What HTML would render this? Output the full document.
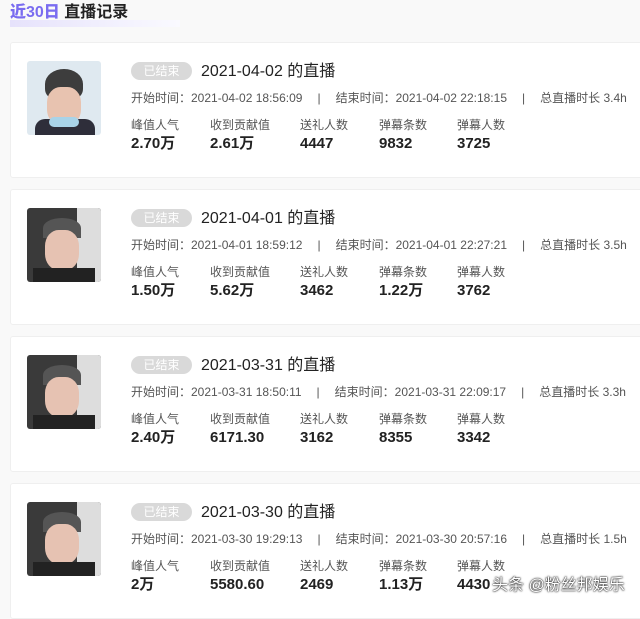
<!DOCTYPE html>
<html><head><meta charset="utf-8"><style>
*{margin:0;padding:0;box-sizing:border-box}
body{width:640px;height:610px;overflow:hidden;background:#f9f9f9;font-family:"Liberation Sans","Noto Sans CJK SC",sans-serif;color:#222;position:relative}
.hd{position:absolute;left:10px;top:2px;font-size:16px;line-height:22px;font-weight:bold;color:#222;z-index:2}
.hd b{color:#7a6cf0}
.hl{position:absolute;left:10px;top:20px;width:170px;height:7px;background:linear-gradient(90deg,#e6e2fb,#fafaff);z-index:1}
.card{position:absolute;left:10px;width:640px;height:136px;background:#fff;border:1px solid #efefef;border-radius:3px}
.av{position:absolute;left:16px;top:18px;width:74px;height:74px;border-radius:3px;overflow:hidden;background:#3a3a3a}
.badge{position:absolute;left:120px;top:19px;width:61px;height:18px;border-radius:9px;background:#d9d9d9;color:#fff;font-size:12px;text-align:center;line-height:18px}
.tt{position:absolute;left:190px;top:19px;font-size:16px;line-height:20px;color:#222}
.info{position:absolute;left:120px;top:47px;font-size:12px;line-height:16px;color:#555;white-space:nowrap}
.info i{font-style:normal;display:inline-block;margin:0 15px 0 15px}
.col{position:absolute;top:74px;font-size:12px;line-height:16px;color:#555}
.col b{display:block;font-size:15px;line-height:18px;height:18px;color:#222;margin-top:2px}
.wm{position:absolute;left:492px;top:576px;font-size:16px;line-height:20px;color:#fff;text-shadow:0 0 2px #000,0 0 1px #000}
</style></head><body>
<div class="hd"><b>近30日</b> 直播记录</div><div class="hl"></div>

<div class="card" style="top:42px">
<div class="av" style="background:#dfe9f0"><div style="position:absolute;left:18px;top:8px;width:38px;height:30px;background:#3d3d3d;border-radius:50% 50% 10px 10px"></div><div style="position:absolute;left:20px;top:26px;width:34px;height:38px;background:#e8c3b0;border-radius:40%"></div><div style="position:absolute;left:8px;top:58px;width:60px;height:20px;background:#2e2e3a;border-radius:10px 10px 0 0"></div><div style="position:absolute;left:22px;top:56px;width:30px;height:10px;background:#a9d3e8;border-radius:6px"></div></div>
<div class="badge">已结束</div><div class="tt">2021-04-02 的直播</div>
<div class="info">开始时间：2021-04-02 18:56:09<i>|</i>结束时间：2021-04-02 22:18:15<i>|</i>总直播时长 3.4h</div>
<div class="col" style="left:120px">峰值人气<b>2.70万</b></div><div class="col" style="left:199px">收到贡献值<b>2.61万</b></div><div class="col" style="left:289px">送礼人数<b>4447</b></div><div class="col" style="left:368px">弹幕条数<b>9832</b></div><div class="col" style="left:446px">弹幕人数<b>3725</b></div>
</div>

<div class="card" style="top:189px">
<div class="av"><div style="position:absolute;left:50px;top:0;width:24px;height:74px;background:#ddd"></div><div style="position:absolute;left:16px;top:10px;width:38px;height:20px;background:#555;border-radius:50% 50% 0 0"></div><div style="position:absolute;left:18px;top:22px;width:34px;height:40px;background:#e6c2b2;border-radius:40%"></div><div style="position:absolute;left:6px;top:60px;width:62px;height:14px;background:#222"></div></div>
<div class="badge">已结束</div><div class="tt">2021-04-01 的直播</div>
<div class="info">开始时间：2021-04-01 18:59:12<i>|</i>结束时间：2021-04-01 22:27:21<i>|</i>总直播时长 3.5h</div>
<div class="col" style="left:120px">峰值人气<b>1.50万</b></div><div class="col" style="left:199px">收到贡献值<b>5.62万</b></div><div class="col" style="left:289px">送礼人数<b>3462</b></div><div class="col" style="left:368px">弹幕条数<b>1.22万</b></div><div class="col" style="left:446px">弹幕人数<b>3762</b></div>
</div>

<div class="card" style="top:336px">
<div class="av"><div style="position:absolute;left:50px;top:0;width:24px;height:74px;background:#ddd"></div><div style="position:absolute;left:16px;top:10px;width:38px;height:20px;background:#555;border-radius:50% 50% 0 0"></div><div style="position:absolute;left:18px;top:22px;width:34px;height:40px;background:#e6c2b2;border-radius:40%"></div><div style="position:absolute;left:6px;top:60px;width:62px;height:14px;background:#222"></div></div>
<div class="badge">已结束</div><div class="tt">2021-03-31 的直播</div>
<div class="info">开始时间：2021-03-31 18:50:11<i>|</i>结束时间：2021-03-31 22:09:17<i>|</i>总直播时长 3.3h</div>
<div class="col" style="left:120px">峰值人气<b>2.40万</b></div><div class="col" style="left:199px">收到贡献值<b>6171.30</b></div><div class="col" style="left:289px">送礼人数<b>3162</b></div><div class="col" style="left:368px">弹幕条数<b>8355</b></div><div class="col" style="left:446px">弹幕人数<b>3342</b></div>
</div>

<div class="card" style="top:483px">
<div class="av"><div style="position:absolute;left:50px;top:0;width:24px;height:74px;background:#ddd"></div><div style="position:absolute;left:16px;top:10px;width:38px;height:20px;background:#555;border-radius:50% 50% 0 0"></div><div style="position:absolute;left:18px;top:22px;width:34px;height:40px;background:#e6c2b2;border-radius:40%"></div><div style="position:absolute;left:6px;top:60px;width:62px;height:14px;background:#222"></div></div>
<div class="badge">已结束</div><div class="tt">2021-03-30 的直播</div>
<div class="info">开始时间：2021-03-30 19:29:13<i>|</i>结束时间：2021-03-30 20:57:16<i>|</i>总直播时长 1.5h</div>
<div class="col" style="left:120px">峰值人气<b>2万</b></div><div class="col" style="left:199px">收到贡献值<b>5580.60</b></div><div class="col" style="left:289px">送礼人数<b>2469</b></div><div class="col" style="left:368px">弹幕条数<b>1.13万</b></div><div class="col" style="left:446px">弹幕人数<b>4430</b></div>
</div>
<div class="wm">头条 @粉丝邦娱乐</div>
</body></html>
